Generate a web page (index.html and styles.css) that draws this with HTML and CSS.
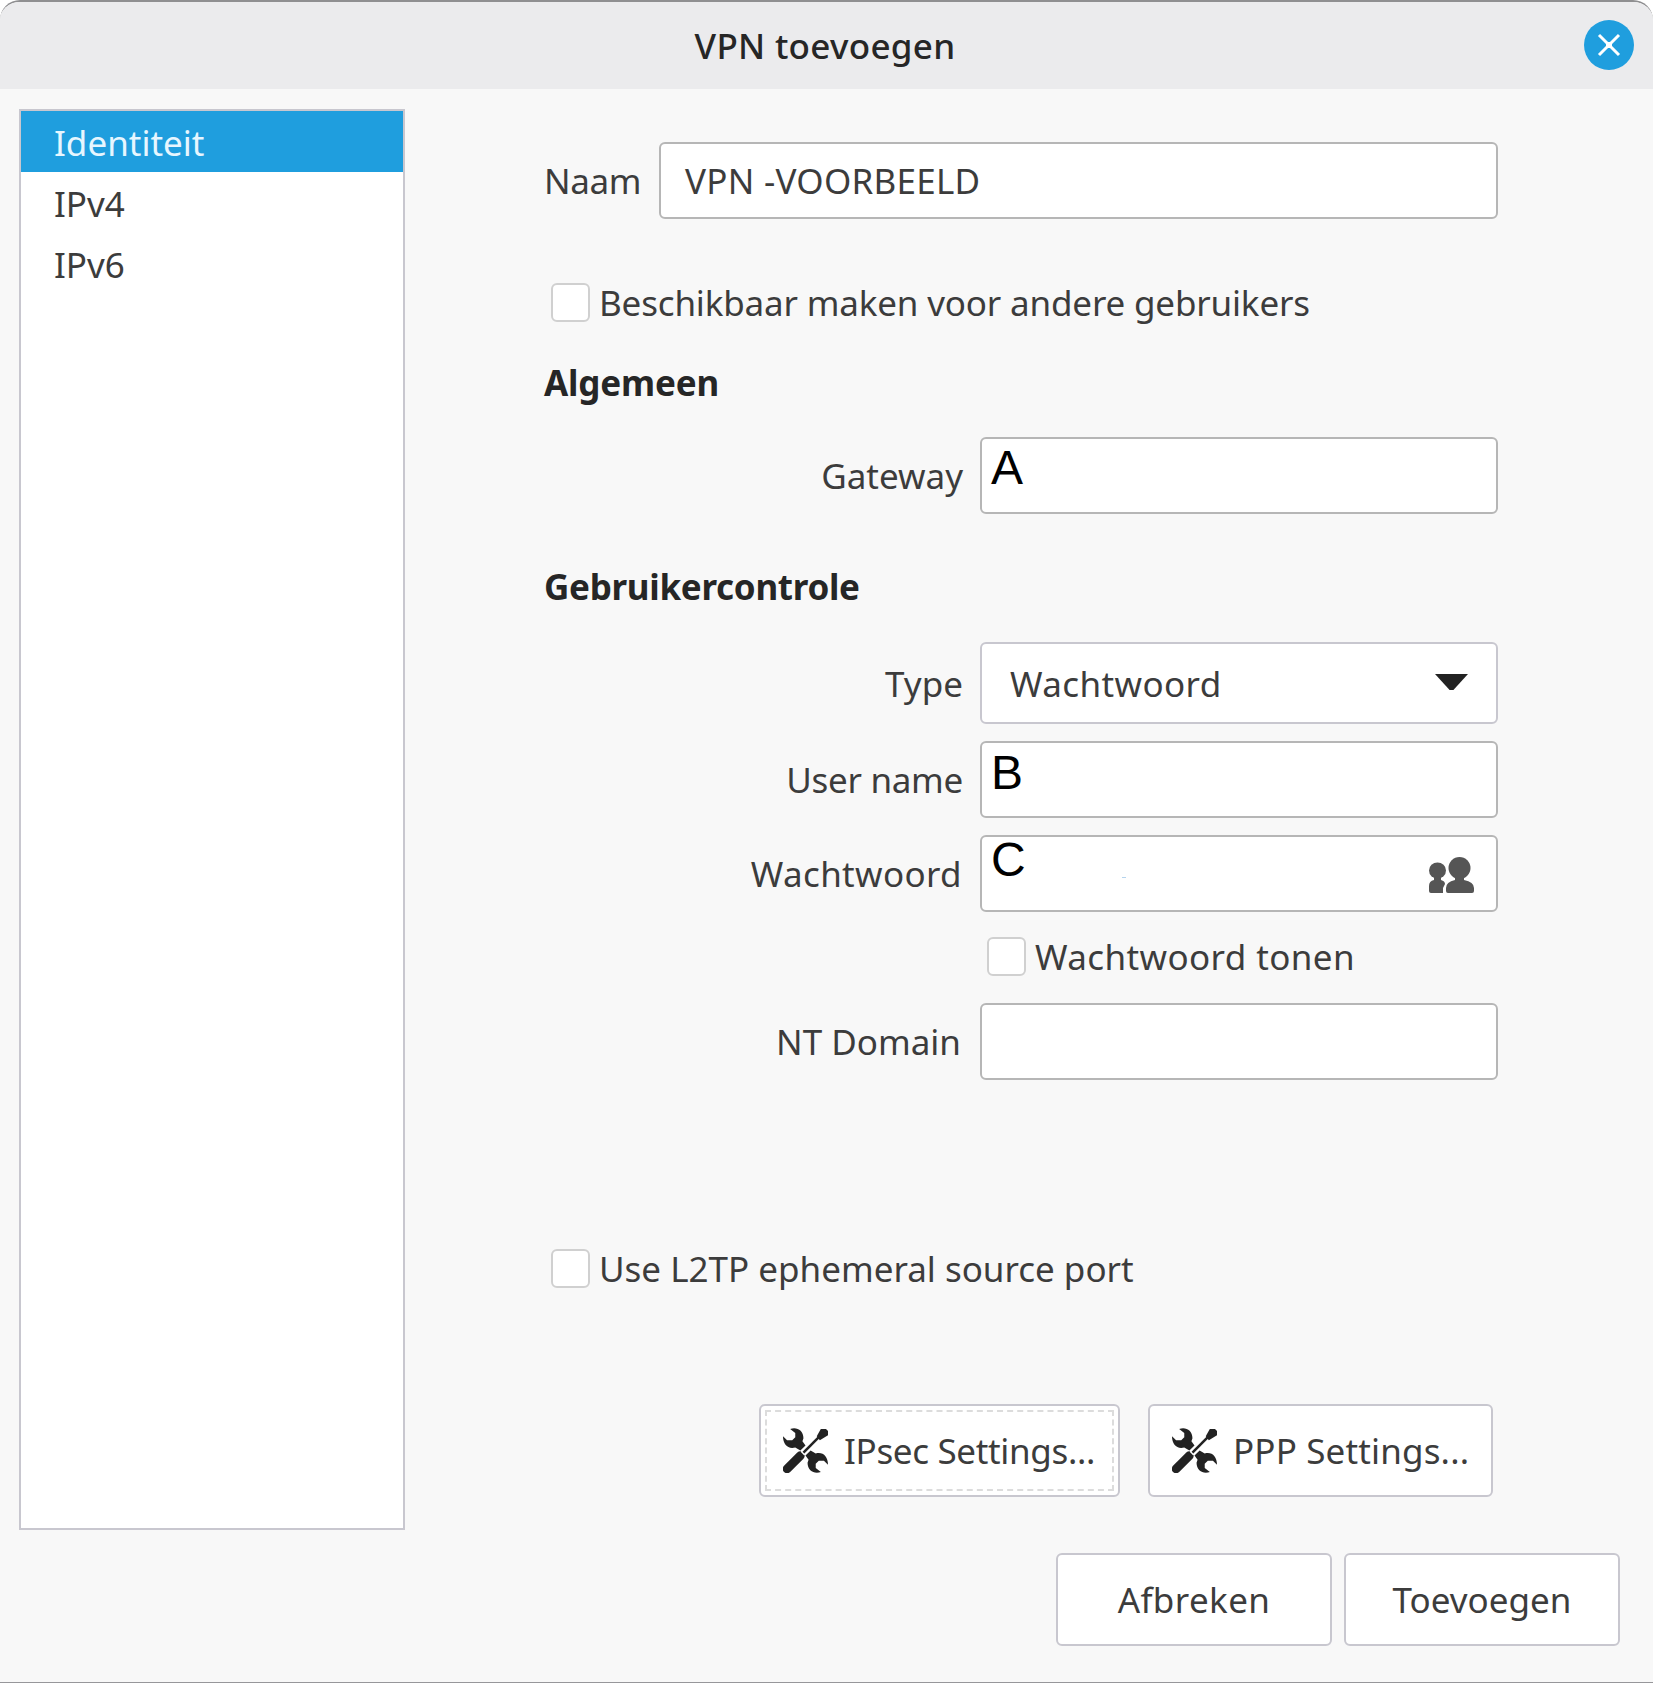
FILE: index.html
```html
<!DOCTYPE html>
<html lang="nl">
<head>
    <meta charset="UTF-8">
    <meta name="viewport" content="width=device-width, initial-scale=1.0">
    <title>VPN toevoegen</title>
    <link rel="stylesheet" href="styles.css">
</head>
<body>
    <div class="dialog">
        <header class="titlebar">
            <h1>VPN toevoegen</h1>
            <button class="close" aria-label="Sluiten">
                <svg viewBox="0 0 50 50" width="50" height="50">
                    <circle cx="25" cy="25" r="25" fill="#1f9ede"/>
                    <path d="M15 15 L35 35 M35 15 L15 35" stroke="#fff" stroke-width="3"/>
                    <rect x="22" y="22" width="6" height="6" fill="#fff"/>
                </svg>
            </button>
        </header>

        <div class="content">
            <ul class="sidebar">
                <li class="active">Identiteit</li>
                <li>IPv4</li>
                <li>IPv6</li>
            </ul>

            <div class="form">
                <div class="name-row">
                    <label class="t-naam">Naam</label>
                    <div class="entry t-value">VPN -VOORBEELD</div>
                </div>
                <div class="check check-share"><span class="box"></span><span class="t-share">Beschikbaar maken voor andere gebruikers</span></div>

                <h2 class="h-general">Algemeen</h2>
                <div class="row">
                    <label class="t-gateway">Gateway</label>
                    <div class="entry letter letter-a">A</div>
                </div>

                <h2 class="h-auth">Gebruikercontrole</h2>
                <div class="row row-type">
                    <label class="t-type">Type</label>
                    <div class="combo">
                        <span class="t-combo">Wachtwoord</span>
                        <svg class="arrow" viewBox="0 0 34 17" width="33" height="16.500"><path d="M0 0 H34 L18.500 17 H15.500 Z" fill="#222"/></svg>
                    </div>
                </div>
                <div class="row row-user">
                    <label class="t-user">User name</label>
                    <div class="entry letter letter-b">B</div>
                </div>
                <div class="row row-pass">
                    <label class="t-pass">Wachtwoord</label>
                    <div class="entry letter letter-c">
                        <span>C</span>
                        <i class="speck"></i>
                        <svg class="people" viewBox="0 0 45 36" width="45" height="36" fill="#555">
                            <ellipse cx="8.500" cy="13.500" rx="8.500" ry="8"/>
                            <path d="M5 19 H12 V23 Q16 24 16 27 L14 31 V36 H2 Q0 36 0 34 V29 Q0 24 5 23 Z"/>
                            <ellipse cx="30.500" cy="11" rx="11" ry="11"/>
                            <path d="M26 19 H35 V23 Q45 25 45 31 V34 Q45 36 43 36 H19 Q17 36 17 34 V31 Q17 25 26 23 Z"/>
                        </svg>
                    </div>
                </div>
                <div class="check check-show"><span class="box"></span><span class="t-show">Wachtwoord tonen</span></div>
                <div class="row row-domain">
                    <label class="t-domain">NT Domain</label>
                    <div class="entry"></div>
                </div>

                <div class="check check-port"><span class="box"></span><span class="t-port">Use L2TP ephemeral source port</span></div>

                <div class="settings">
                    <button class="btn btn-ipsec focused">
                        <svg class="tools" viewBox="0 0 44 44" width="45" height="45">
                            <path id="jaw" d="M7 1 C13 -1.500 20 2 20 10 L19 13 L22 17 L17 22 L12 19 C5 21 0 16 0 8 L4 12 H9 L12 9 V5 Z"/>
                            <use href="#jaw" transform="rotate(180 22 22)"/>
                            <path d="M17 27 L4 40" stroke="#222" stroke-width="8.500" stroke-linecap="round"/>
                            <path d="M19 25 L35 9" stroke="#fff" stroke-width="5"/>
                            <path d="M20 24 L36 8" stroke="#222" stroke-width="2.500"/>
                            <path d="M33 8 L37 1 H42 L44 3 V7 L36 12 Z"/>
                        </svg>
                        <span class="t-ipsec">IPsec Settings...</span>
                    </button>
                    <button class="btn btn-ppp">
                        <svg class="tools" viewBox="0 0 44 44" width="45" height="45">
                            <use href="#jaw"/>
                            <use href="#jaw" transform="rotate(180 22 22)"/>
                            <path d="M17 27 L4 40" stroke="#222" stroke-width="8.500" stroke-linecap="round"/>
                            <path d="M19 25 L35 9" stroke="#fff" stroke-width="5"/>
                            <path d="M20 24 L36 8" stroke="#222" stroke-width="2.500"/>
                            <path d="M33 8 L37 1 H42 L44 3 V7 L36 12 Z"/>
                        </svg>
                        <span class="t-ppp">PPP Settings...</span>
                    </button>
                </div>
            </div>
        </div>

        <footer class="actions">
            <button class="btn"><span class="t-cancel">Afbreken</span></button>
            <button class="btn"><span class="t-add">Toevoegen</span></button>
        </footer>
    </div>
</body>
</html>
```
FILE: styles.css
```css
* {
    box-sizing: border-box;
}
body {
    margin: 0;
    background: #fff;
    font-family: "Noto Sans", "Open Sans", sans-serif;
    font-size: 35px;
    line-height: 48px;
    color: #3c3c3c;
    white-space: nowrap;
}
.dialog {
    height: 1683px;
    background: #f8f8f8;
    border-top: 2px solid #8f8f91;
    border-bottom: 1px solid #97979a;
    border-radius: 20px 20px 0 0;
    overflow: hidden;
}
.titlebar {
    display: grid;
    grid-template-columns: 1fr auto 1fr;
    align-items: center;
    height: 87px;
    padding: 0 19px 0 16px;
    background: #ebebed;
}
h1 {
    grid-column: 2;
    margin: 0;
    font-size: 35px;
    font-weight: 500;
    letter-spacing: 0.3px;
    color: #262626;
}
.close {
    justify-self: end;
    width: 50px;
    height: 50px;
    margin-bottom: 2px;
    padding: 0;
    border: 0;
    background: none;
}
svg {
    display: block;
    flex: none;
}
.content {
    display: flex;
    padding: 20px 0 0 19px;
}
.sidebar {
    width: 386px;
    height: 1421px;
    margin: 0;
    padding: 0;
    list-style: none;
    background: #fff;
    border: 2px solid #c8c7cf;
}
.sidebar li {
    height: 61px;
    padding-left: 33px;
    line-height: 63px;
}
.sidebar .active {
    background: #1f9ede;
    color: #e6f6ff;
}

/* form */
.form {
    width: 954px;
    margin-left: 139px;
    padding-top: 33px;
}
.name-row {
    display: flex;
    align-items: center;
    justify-content: space-between;
}
.name-row .entry {
    width: 839px;
    padding-left: 24px;
}
.row {
    display: grid;
    grid-template-columns: 421px 518px;
    gap: 15px;
    align-items: center;
}
.row label {
    padding-right: 2px;
    text-align: right;
}
.entry {
    display: flex;
    align-items: center;
    height: 77px;
    background: #fff;
    border: 2px solid #b6b6b6;
    border-radius: 6px;
}
.letter {
    padding-left: 9px;
    font-family: "Liberation Sans", Arial, sans-serif;
    font-size: 48px;
    color: #000;
}
.letter-a {
    padding-bottom: 15px;
}
.letter-b {
    padding-bottom: 13px;
}
.letter-c span {
    margin-top: -28px;
}
.speck {
    width: 4px;
    height: 1px;
    margin: 8px 0 0 96px;
    background: #b5d4ee;
}
.people {
    margin-left: auto;
    margin-right: 22px;
    margin-top: 3px;
}
.combo {
    display: flex;
    align-items: center;
    justify-content: space-between;
    height: 82px;
    padding: 0 28px;
    background: #fff;
    border: 2px solid #c8c7cf;
    border-radius: 6px;
}
.arrow {
    margin-bottom: 2px;
}
.check {
    display: flex;
    align-items: center;
    gap: 9px;
    height: 39px;
}
.box {
    width: 39px;
    height: 39px;
    background: #fff;
    border: 2px solid #d0d0d0;
    border-radius: 6px;
}
.check-share {
    margin: 64px 0 0 7px;
}
.check-show {
    margin: 25px 0 0 443px;
}
.check-port {
    margin: 169px 0 0 7px;
}
h2 {
    height: 48px;
    font-size: 35px;
    line-height: 48px;
    color: #262626;
}
.h-general {
    margin: 37px 0 30px;
    letter-spacing: -0.15px;
}
.h-auth {
    margin: 49px 0 31px;
    letter-spacing: -0.3px;
}
.row-user {
    margin-top: 17px;
}
.row-pass {
    margin-top: 17px;
}
.row-domain {
    margin-top: 27px;
}

/* text widths */
.t-naam {
    letter-spacing: -0.4px;
}
.t-value {
    letter-spacing: 0.25px;
}
.t-share {
    letter-spacing: -0.17px;
}
.t-gateway, .t-type, .t-combo {
    padding-top: 1px;
}
.t-user {
    letter-spacing: -0.3px;
}
.row .t-pass {
    padding-right: 3px;
    letter-spacing: 0.35px;
}
.row .t-domain {
    padding-right: 4px;
}
.t-combo, .t-show, .t-cancel {
    letter-spacing: 0.4px;
}
.t-ipsec {
    letter-spacing: -0.33px;
}
.t-ppp {
    letter-spacing: 0.15px;
}

/* buttons */
.btn {
    display: flex;
    align-items: center;
    justify-content: center;
    height: 93px;
    padding: 0;
    font: inherit;
    color: inherit;
    background: #fff;
    border: 2px solid #c8c7cf;
    border-radius: 6px;
}
.tools {
    margin-right: 16px;
    fill: #222;
}
.settings {
    display: flex;
    gap: 28px;
    margin: 116px 0 0 215px;
}
.settings .btn {
    justify-content: flex-start;
    padding-left: 22px;
}
.btn-ipsec {
    width: 361px;
}
.btn-ppp {
    width: 345px;
}
.focused {
    outline: 2px dashed #dcdcdc;
    outline-offset: -8px;
}
.actions {
    display: flex;
    justify-content: flex-end;
    gap: 12px;
    padding: 23px 33px 0 0;
}
.actions .btn {
    width: 276px;
}
```
